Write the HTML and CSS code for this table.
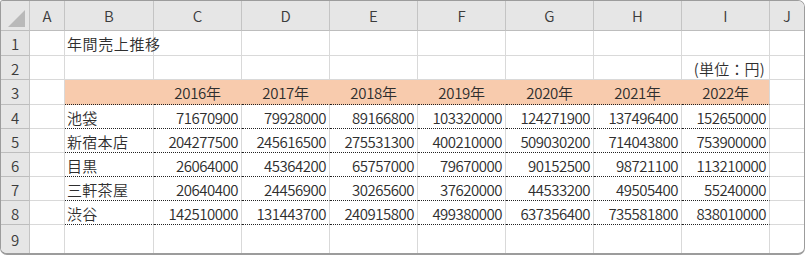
FILE: index.html
```html
<!DOCTYPE html>
<html lang="ja">
<head>
<meta charset="utf-8">
<title>年間売上推移</title>
<link rel="stylesheet" href="styles.css">
</head>
<body>
<div class="sheet">
  <div class="grid">
    <div class="corner"><svg class="tri" width="17" height="17" viewBox="0 0 17 17"><polygon points="17,0 17,17 0,17" fill="#b9b9b9"/></svg></div>
    <div class="h">A</div><div class="h">B</div><div class="h">C</div><div class="h">D</div><div class="h">E</div><div class="h">F</div><div class="h">G</div><div class="h">H</div><div class="h">I</div><div class="h last">J</div>

    <div class="r">1</div><div class="c"></div><div class="c txt title">年間売上推移</div><div class="c"></div><div class="c"></div><div class="c"></div><div class="c"></div><div class="c"></div><div class="c"></div><div class="c"></div><div class="c last"></div>

    <div class="r">2</div><div class="c"></div><div class="c"></div><div class="c"></div><div class="c"></div><div class="c"></div><div class="c"></div><div class="c"></div><div class="c"></div><div class="c unit">(単位：円)</div><div class="c last"></div>

    <div class="r">3</div><div class="c"></div><div class="c or dot"></div><div class="c or dot yr">2016年</div><div class="c or dot yr">2017年</div><div class="c or dot yr">2018年</div><div class="c or dot yr">2019年</div><div class="c or dot yr">2020年</div><div class="c or dot yr">2021年</div><div class="c or dot yr end">2022年</div><div class="c last"></div>

    <div class="r">4</div><div class="c"></div><div class="c dot txt">池袋</div><div class="c dot num">71670900</div><div class="c dot num">79928000</div><div class="c dot num">89166800</div><div class="c dot num">103320000</div><div class="c dot num">124271900</div><div class="c dot num">137496400</div><div class="c dot num">152650000</div><div class="c last"></div>

    <div class="r">5</div><div class="c"></div><div class="c dot txt">新宿本店</div><div class="c dot num">204277500</div><div class="c dot num">245616500</div><div class="c dot num">275531300</div><div class="c dot num">400210000</div><div class="c dot num">509030200</div><div class="c dot num">714043800</div><div class="c dot num">753900000</div><div class="c last"></div>

    <div class="r">6</div><div class="c"></div><div class="c dot txt">目黒</div><div class="c dot num">26064000</div><div class="c dot num">45364200</div><div class="c dot num">65757000</div><div class="c dot num">79670000</div><div class="c dot num">90152500</div><div class="c dot num">98721100</div><div class="c dot num">113210000</div><div class="c last"></div>

    <div class="r">7</div><div class="c"></div><div class="c dot txt">三軒茶屋</div><div class="c dot num">20640400</div><div class="c dot num">24456900</div><div class="c dot num">30265600</div><div class="c dot num">37620000</div><div class="c dot num">44533200</div><div class="c dot num">49505400</div><div class="c dot num">55240000</div><div class="c last"></div>

    <div class="r">8</div><div class="c"></div><div class="c dot txt">渋谷</div><div class="c dot num">142510000</div><div class="c dot num">131443700</div><div class="c dot num">240915800</div><div class="c dot num">499380000</div><div class="c dot num">637356400</div><div class="c dot num">735581800</div><div class="c dot num">838010000</div><div class="c last"></div>

    <div class="r bottom">9</div><div class="c bottom"></div><div class="c bottom"></div><div class="c bottom"></div><div class="c bottom"></div><div class="c bottom"></div><div class="c bottom"></div><div class="c bottom"></div><div class="c bottom"></div><div class="c bottom"></div><div class="c bottom last"></div>
  </div>
</div>
</body>
</html>
```

FILE: styles.css
```css
* { box-sizing: border-box; }

html, body {
  margin: 0;
  padding: 0;
  background: #ffffff;
}

body {
  font-family: "Noto Sans CJK JP", "Noto Sans", sans-serif;
  font-size: 15px;
  font-weight: 350;
  color: #2e2e2e;
}

.sheet {
  width: 805px;
  height: 255px;
  border: 1px solid #9c9c9c;
  border-bottom-width: 2px;
  border-radius: 3px 7px 7px 7px;
  overflow: hidden;
  background: #ffffff;
}

.grid {
  display: grid;
  grid-template-columns: 29px 35px 89px 88px 88px 88px 88px 88px 88px 88px 1fr;
  grid-template-rows: 30px 25px 24px 25px 24px 24px 24px 24px 24px 1fr;
  height: 100%;
}

.corner,
.h,
.r {
  background: #e6e6e6;
  color: #3c3c3c;
  border-right: 1px solid #c4c4c4;
  border-bottom: 1px solid #bdbdbd;
  display: flex;
  align-items: center;
  justify-content: center;
  line-height: 1;
}

.corner {
  justify-content: flex-end;
  align-items: flex-end;
  padding: 0 4px 3px 0;
}

.tri { display: block; }

.h { padding-bottom: 1px; }
.h.last { border-right: none; }

.r { padding-top: 1px; }
.r.bottom { border-bottom: none; }

.c {
  border-right: 1px solid #d9d9d9;
  border-bottom: 1px solid #d9d9d9;
  display: flex;
  align-items: center;
  padding: 1px 3px 0 3px;
  white-space: nowrap;
  line-height: 1;
}

.c.last { border-right: none; }
.c.bottom { border-bottom: none; }

.txt {
  letter-spacing: 0.3px;
  padding-left: 2px;
}

.title {
  overflow: visible;
  letter-spacing: 0.6px;
}

.unit {
  justify-content: flex-end;
  overflow: visible;
  padding-right: 4px;
  letter-spacing: 0.2px;
}

.or {
  background: #f8cbad;
  border-right-color: #f8cbad;
}

.or.end { border-right-color: #d9d9d9; }

.dot { border-bottom: 1px dotted #222222; }

.yr {
  justify-content: center;
  letter-spacing: -0.3px;
}

.num {
  justify-content: flex-end;
  letter-spacing: -0.5px;
  padding-right: 3px;
}
```
